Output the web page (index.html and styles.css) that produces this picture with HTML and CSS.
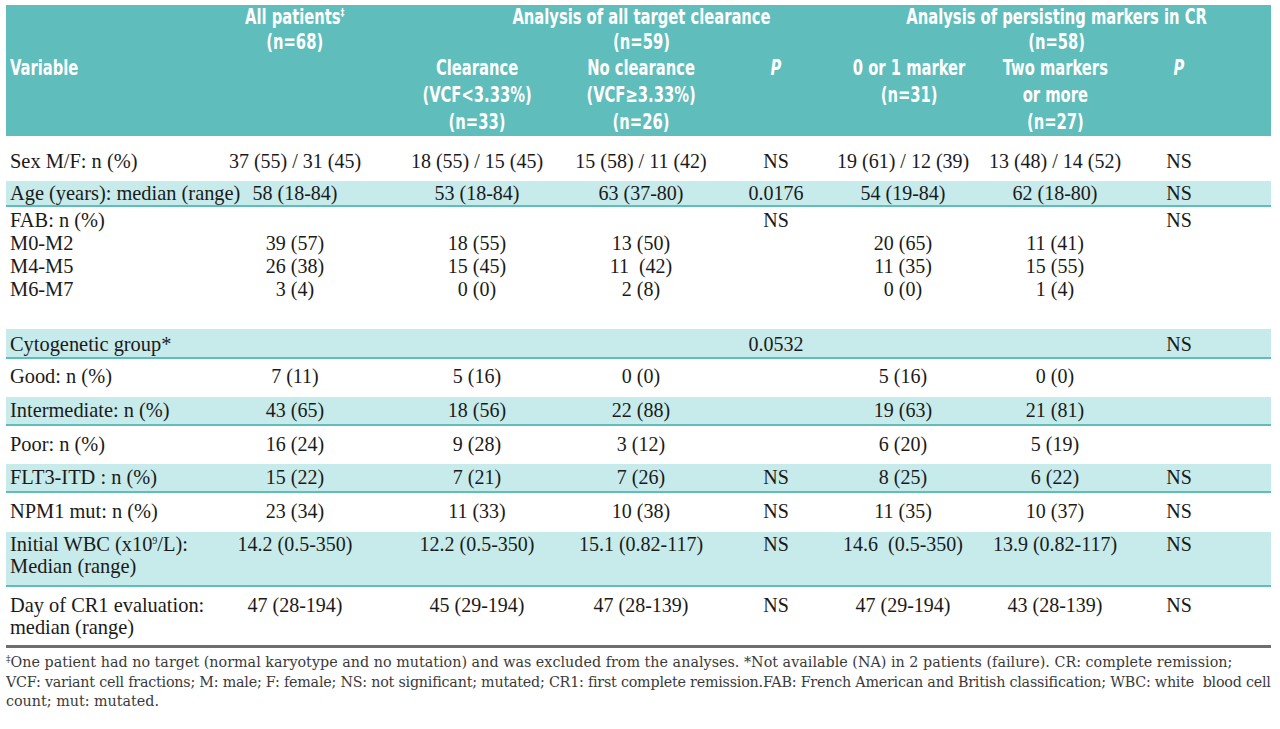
FILE: index.html
```html
<!DOCTYPE html>
<html lang="en">
<head>
<meta charset="utf-8">
<title>Patient characteristics</title>
<link rel="stylesheet" href="styles.css">
</head>
<body>
<div class="page">
  <table class="data">
    <colgroup>
      <col class="c-var">
      <col class="c-all">
      <col class="c-clr">
      <col class="c-noclr">
      <col class="c-p1">
      <col class="c-m01">
      <col class="c-m2">
      <col class="c-p2">
    </colgroup>
    <thead>
      <tr class="head-top">
        <th></th>
        <th><span class="hx">All patients<sup class="dag">‡</sup><br>(n=68)</span></th>
        <th colspan="3" class="grp-left"><span class="hx">Analysis of all target clearance<br>(n=59)</span></th>
        <th colspan="3" class="grp-right"><span class="hx">Analysis of persisting markers in CR<br>(n=58)</span></th>
      </tr>
      <tr class="head-sub">
        <th class="var"><span class="hx hx-left">Variable</span></th>
        <th></th>
        <th><span class="hx">Clearance<br>(VCF&lt;3.33%)<br>(n=33)</span></th>
        <th><span class="hx">No clearance<br>(VCF≥3.33%)<br>(n=26)</span></th>
        <th><span class="hx"><i>P</i></span></th>
        <th><span class="hx">0 or 1 marker<br>(n=31)</span></th>
        <th><span class="hx">Two markers<br>or more<br>(n=27)</span></th>
        <th class="last"><span class="hx"><i>P</i></span></th>
      </tr>
    </thead>
    <tbody>
      <tr class="r-sex">
        <td class="lbl">Sex M/F: n (%)</td>
        <td>37 (55) / 31 (45)</td>
        <td>18 (55) / 15 (45)</td>
        <td>15 (58) / 11 (42)</td>
        <td>NS</td>
        <td>19 (61) / 12 (39)</td>
        <td>13 (48) / 14 (52)</td>
        <td class="last">NS</td>
      </tr>
      <tr class="band r-age">
        <td class="lbl">Age (years): median (range)</td>
        <td>58 (18-84)</td>
        <td>53 (18-84)</td>
        <td>63 (37-80)</td>
        <td>0.0176</td>
        <td>54 (19-84)</td>
        <td>62 (18-80)</td>
        <td class="last">NS</td>
      </tr>
      <tr class="fab fab-first">
        <td class="lbl">FAB: n (%)</td>
        <td></td>
        <td></td>
        <td></td>
        <td>NS</td>
        <td></td>
        <td></td>
        <td class="last">NS</td>
      </tr>
      <tr class="fab">
        <td class="lbl">M0-M2</td>
        <td>39 (57)</td>
        <td>18 (55)</td>
        <td>13 (50)</td>
        <td></td>
        <td>20 (65)</td>
        <td>11 (41)</td>
        <td class="last"></td>
      </tr>
      <tr class="fab">
        <td class="lbl">M4-M5</td>
        <td>26 (38)</td>
        <td>15 (45)</td>
        <td>11&nbsp; (42)</td>
        <td></td>
        <td>11 (35)</td>
        <td>15 (55)</td>
        <td class="last"></td>
      </tr>
      <tr class="fab fab-last">
        <td class="lbl">M6-M7</td>
        <td>3 (4)</td>
        <td>0 (0)</td>
        <td>2 (8)</td>
        <td></td>
        <td>0 (0)</td>
        <td>1 (4)</td>
        <td class="last"></td>
      </tr>
      <tr class="band r-cyto">
        <td class="lbl">Cytogenetic group*</td>
        <td></td>
        <td></td>
        <td></td>
        <td>0.0532</td>
        <td></td>
        <td></td>
        <td class="last">NS</td>
      </tr>
      <tr class="white r-good">
        <td class="lbl">Good: n (%)</td>
        <td>7 (11)</td>
        <td>5 (16)</td>
        <td>0 (0)</td>
        <td></td>
        <td>5 (16)</td>
        <td>0 (0)</td>
        <td class="last"></td>
      </tr>
      <tr class="band r-mid">
        <td class="lbl">Intermediate: n (%)</td>
        <td>43 (65)</td>
        <td>18 (56)</td>
        <td>22 (88)</td>
        <td></td>
        <td>19 (63)</td>
        <td>21 (81)</td>
        <td class="last"></td>
      </tr>
      <tr class="white r-poor">
        <td class="lbl">Poor: n (%)</td>
        <td>16 (24)</td>
        <td>9 (28)</td>
        <td>3 (12)</td>
        <td></td>
        <td>6 (20)</td>
        <td>5 (19)</td>
        <td class="last"></td>
      </tr>
      <tr class="band r-mid">
        <td class="lbl">FLT3-ITD : n (%)</td>
        <td>15 (22)</td>
        <td>7 (21)</td>
        <td>7 (26)</td>
        <td>NS</td>
        <td>8 (25)</td>
        <td>6 (22)</td>
        <td class="last">NS</td>
      </tr>
      <tr class="white r-npm">
        <td class="lbl">NPM1 mut: n (%)</td>
        <td>23 (34)</td>
        <td>11 (33)</td>
        <td>10 (38)</td>
        <td>NS</td>
        <td>11 (35)</td>
        <td>10 (37)</td>
        <td class="last">NS</td>
      </tr>
      <tr class="band r-wbc">
        <td class="lbl">Initial WBC (x10<sup class="exp">9</sup>/L):<br>Median (range)</td>
        <td>14.2 (0.5-350)</td>
        <td>12.2 (0.5-350)</td>
        <td>15.1 (0.82-117)</td>
        <td>NS</td>
        <td>14.6&nbsp; (0.5-350)</td>
        <td>13.9 (0.82-117)</td>
        <td class="last">NS</td>
      </tr>
      <tr class="white r-day">
        <td class="lbl">Day of CR1 evaluation:<br>median (range)</td>
        <td>47 (28-194)</td>
        <td>45 (29-194)</td>
        <td>47 (28-139)</td>
        <td>NS</td>
        <td>47 (29-194)</td>
        <td>43 (28-139)</td>
        <td class="last">NS</td>
      </tr>
    </tbody>
  </table>
  <p class="note"><span class="note-line note-1"><sup class="dag-note">‡</sup>One patient had no target (normal karyotype and no mutation) and was excluded from the analyses. *Not available (NA) in 2 patients (failure). CR: complete remission;</span><span class="note-line note-2">VCF: variant cell fractions; M: male; F: female; NS: not significant; mutated; CR1: first complete remission.FAB: French American and British classification; WBC: white &nbsp;blood cell</span><span class="note-line">count; mut: mutated.</span></p>
</div>
</body>
</html>
```

FILE: styles.css
```css
html, body {
  margin: 0;
  padding: 0;
  background: #ffffff;
}

.page {
  padding: 5px 9px 0 6px;
}

.data {
  width: 1265px;
  table-layout: fixed;
  border-collapse: collapse;
  font-family: "Liberation Serif", "Times New Roman", serif;
  font-size: 20px;
  color: #1a1a1a;
}

.c-var { width: 197px; }
.c-all { width: 184px; }
.c-clr { width: 180px; }
.c-noclr { width: 148px; }
.c-p1 { width: 122px; }
.c-m01 { width: 132px; }
.c-m2 { width: 172px; }
.c-p2 { width: 130px; }

/* header */
.data thead th {
  background: #5fbdbc;
  color: #ffffff;
  font-family: "DejaVu Sans Condensed", "DejaVu Sans", sans-serif;
  font-stretch: condensed;
  font-weight: bold;
  font-size: 21px;
  text-align: center;
  vertical-align: top;
  padding: 0;
  white-space: nowrap;
}

.hx {
  display: inline-block;
  transform: scaleX(0.78);
  transform-origin: center top;
}

.hx-left {
  transform-origin: left top;
}

.head-top th {
  line-height: 25px;
  padding-top: 5px;
  padding-bottom: 4px;
}

.head-sub th {
  line-height: 27px;
}

.data thead th.var {
  text-align: left;
  padding-left: 4px;
}

.data thead th.grp-left {
  padding-left: 58px;
}

.data thead th.grp-right {
  padding-left: 6px;
}

.data thead th.last {
  padding-right: 54px;
}

.dag {
  font-size: 11px;
  vertical-align: 8px;
  line-height: 0;
}

/* body */
.data td {
  padding: 0;
  text-align: center;
  vertical-align: top;
  white-space: nowrap;
  line-height: 22px;
}

.data td.lbl {
  text-align: left;
  padding-left: 4px;
  font-size: 20.4px;
}

.data td.last {
  padding-right: 54px;
}

.band td {
  background: #c7eaea;
  border-bottom: 2px solid #5fbdbc;
}

.r-sex td { padding-top: 14px; padding-bottom: 9px; }
.r-age td { padding-top: 1px; padding-bottom: 1px; }

.fab td { line-height: 23px; }
.fab-first td { padding-top: 2px; }
.fab-last td { padding-bottom: 28px; }

.r-cyto td { padding-top: 4px; padding-bottom: 2px; }
.r-good td { padding-top: 6px; padding-bottom: 10px; }
.r-mid td { padding-top: 2px; padding-bottom: 3px; }
.r-poor td { padding-top: 7px; padding-bottom: 9px; }
.r-npm td { padding-top: 7px; padding-bottom: 10px; }
.r-wbc td { padding-top: 1px; padding-bottom: 8px; }
.r-day td {
  padding-top: 7px;
  padding-bottom: 7px;
  border-bottom: 3px solid #6e6e6e;
}

.exp {
  font-size: 10px;
  vertical-align: 7px;
  line-height: 0;
}

/* footnote */
.note {
  margin: 5px 0 0 0;
  font-family: "DejaVu Serif", "Liberation Serif", serif;
  font-size: 14.3px;
  line-height: 19.5px;
  color: #3a3a3a;
}

.note-line {
  display: block;
  white-space: nowrap;
}

.note-1 {
  letter-spacing: 0.02px;
}

.note-2 {
  letter-spacing: -0.22px;
}

.dag-note {
  font-size: 9px;
  vertical-align: 5px;
  line-height: 0;
}
```
